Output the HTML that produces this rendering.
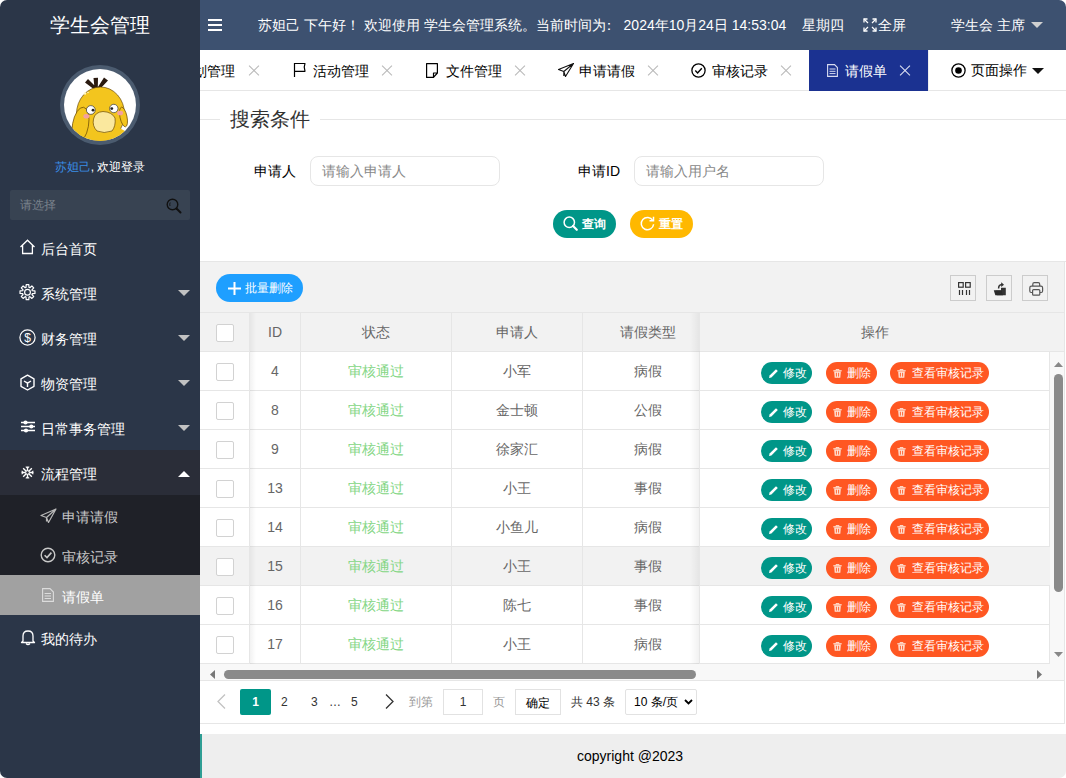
<!DOCTYPE html>
<html><head><meta charset="utf-8">
<style>
*{box-sizing:border-box;margin:0;padding:0}
html,body{width:1066px;height:778px;background:#fff;overflow:hidden;font-family:"Liberation Sans",sans-serif}
#app{position:absolute;left:0;top:0;width:1066px;height:778px;border-radius:7px;overflow:hidden;background:#fff}
.abs{position:absolute}
.t{position:absolute;white-space:nowrap;line-height:20px}
svg{position:absolute;overflow:visible}
#side{left:0;top:0;width:200px;height:778px;background:#2b3648}
#side .title{left:0;width:200px;top:13px;text-align:center;color:#fff;font-size:20px;line-height:24px}
.mi{position:absolute;left:0;width:200px;height:45px}
.mi .tx{position:absolute;left:41px;top:2px;line-height:45px;font-size:14px;color:#fff;white-space:nowrap;font-weight:500}
.mi .arr{position:absolute;left:178px;top:20px;width:0;height:0;border-left:6px solid transparent;border-right:6px solid transparent;border-top:6px solid #c2c2c2}
.si{position:absolute;left:0;width:200px;height:40px}
.si .tx{position:absolute;left:62px;top:2px;line-height:40px;font-size:14px;color:#c8c8c8;white-space:nowrap;font-weight:500}
#hdr{left:200px;top:0;width:866px;height:50px;background:#3d5170}
#hdr .t{color:#fff;font-size:14px;top:15px;font-weight:500}
#tabs{left:200px;top:50px;width:866px;height:41px;background:#fff;border-bottom:1px solid #e6e6e6}
#tabs .t{color:#000;font-weight:500}
.x{position:absolute;width:11px;height:11px}
.x:before,.x:after{content:"";position:absolute;left:-1.5px;top:5px;width:14px;height:1px;background:#b8b8b8;transform:rotate(45deg)}
.x:after{transform:rotate(-45deg)}
.xw:before,.xw:after{background:#e0e4f4}
.lbl{font-size:14px;color:#000;font-weight:500}
.inp{position:absolute;height:30px;width:190px;border:1px solid #e6e6e6;border-radius:8px;background:#fff}
.inp .t{left:11px;top:4px;font-size:14px;color:#888}
.btn{position:absolute;height:28px;border-radius:14px;color:#fff;font-size:12px}
.tbl-line{position:absolute;height:1px;background:#e6e6e6}
.vl{position:absolute;width:1px;background:#e6e6e6}
.cb{position:absolute;width:18px;height:18px;border:1px solid #d2d2d2;border-radius:2px;background:#fff}
.cell{position:absolute;text-align:center;font-size:14px;color:#666;line-height:20px;white-space:nowrap}
.green{color:#84d684}
.ob{position:absolute;height:22px;border-radius:11px;color:#fff;font-size:12px;line-height:22px;font-weight:500}

</style></head><body>
<div id="app">
<div class="tbl-line" style="left:200px;top:119px;width:20px"></div>
<div class="tbl-line" style="left:320px;top:119px;width:746px"></div>
<div class="t" style="left:230px;top:106px;font-size:20px;line-height:26px;color:#333;font-weight:300">搜索条件</div>
<div class="t lbl" style="left:254px;top:161px">申请人</div>
<div class="inp" style="left:310px;top:156px"><div class="t">请输入申请人</div></div>
<div class="t lbl" style="left:578px;top:161px">申请ID</div>
<div class="inp" style="left:634px;top:156px"><div class="t">请输入用户名</div></div>
<div class="btn" style="left:553px;top:210px;width:63px;background:#009688"><svg width="15" height="15" style="left:10px;top:6px"><circle cx="6.3" cy="6.3" r="5.2" fill="none" stroke="#fff" stroke-width="1.5"/><path d="M10 10L13.8 13.8" stroke="#fff" stroke-width="2.2" stroke-linecap="round"/></svg><div class="t" style="left:29px;top:4px;font-size:12px;font-weight:bold">查询</div></div>
<div class="btn" style="left:630px;top:210px;width:63px;background:#ffb800"><svg width="15" height="15" style="left:10px;top:6px"><path d="M12.8 4.5 A6.2 6.2 0 1 0 13.6 8.2" fill="none" stroke="#fff" stroke-width="1.5"/><path d="M9.5 4.8 H13.5 V0.8" fill="none" stroke="#fff" stroke-width="1.5"/></svg><div class="t" style="left:29px;top:4px;font-size:12px;font-weight:bold">重置</div></div>
<div class="abs" style="left:200px;top:261px;width:866px;height:1px;background:#e6e6e6"></div>
<div class="abs" style="left:200px;top:262px;width:864px;height:51px;background:#f2f2f2;border-bottom:1px solid #e6e6e6"></div>
<div class="abs" style="left:1064px;top:262px;width:1px;height:462px;background:#e6e6e6"></div>
<div class="btn" style="left:216px;top:274px;width:87px;background:#1e9fff"><svg width="13" height="13" style="left:12px;top:8px"><path d="M6.5 0V13M0 6.5H13" stroke="#fff" stroke-width="2"/></svg><div class="t" style="left:29px;top:4px;font-size:12px;font-weight:500">批量删除</div></div>
<div class="abs" style="left:950px;top:275px;width:26px;height:26px;border:1px solid #ccc"></div>
<div class="abs" style="left:986px;top:275px;width:26px;height:26px;border:1px solid #ccc"></div>
<div class="abs" style="left:1022px;top:275px;width:26px;height:26px;border:1px solid #ccc"></div>
<svg width="14" height="14" style="left:957px;top:281px"><rect x="1.6" y="1.6" width="4.6" height="4.6" fill="none" stroke="#333" stroke-width="1.2"/><rect x="8.6" y="1.6" width="4.6" height="4.6" fill="none" stroke="#333" stroke-width="1.2"/><path d="M2.5 9V14M5.5 9V14M9.5 9V14M12.5 9V14" stroke="#333" stroke-width="1.2"/></svg>
<svg width="14" height="14" style="left:992px;top:281px"><path d="M3.5 9.5 H9 V6.8 H13.8 V14.3 H4.8 Z" fill="#333"/><path d="M1.8 9.2 H9.5 L11 14.3 H3.3 Z" fill="#2a2a2a"/><path d="M6.6 7.5 Q6.6 3.8 10 3.6" fill="none" stroke="#333" stroke-width="1.5"/><path d="M9.2 1.2 L12 3.7 L9.2 6 Z" fill="#333"/></svg>
<svg width="15" height="14" style="left:1029px;top:282px"><path d="M3.8 4 V2.2 Q3.8 0.7 5.3 0.7 H9.2 Q10.7 0.7 10.7 2.2 V4" fill="none" stroke="#555" stroke-width="1.2"/><path d="M3.5 10.5 H2.2 Q0.8 10.5 0.8 9 V5.8 Q0.8 4.2 2.4 4.2 H12 Q13.6 4.2 13.6 5.8 V9 Q13.6 10.5 12.2 10.5 H11" fill="none" stroke="#555" stroke-width="1.2"/><rect x="3.6" y="7.6" width="7.2" height="5.6" rx="1" fill="#f2f2f2" stroke="#555" stroke-width="1.2"/></svg>
<div class="abs" style="left:200px;top:313px;width:864px;height:38px;background:#f2f2f2"></div>
<div class="abs" style="left:200px;top:352px;width:850px;height:312px;background:#fff"></div>
<div class="abs" style="left:200px;top:547px;width:850px;height:38px;background:#f2f2f2"></div>
<div class="tbl-line" style="left:200px;top:351px;width:850px"></div>
<div class="tbl-line" style="left:200px;top:390px;width:850px"></div>
<div class="tbl-line" style="left:200px;top:429px;width:850px"></div>
<div class="tbl-line" style="left:200px;top:468px;width:850px"></div>
<div class="tbl-line" style="left:200px;top:507px;width:850px"></div>
<div class="tbl-line" style="left:200px;top:546px;width:850px"></div>
<div class="tbl-line" style="left:200px;top:585px;width:850px"></div>
<div class="tbl-line" style="left:200px;top:624px;width:850px"></div>
<div class="tbl-line" style="left:200px;top:663px;width:850px"></div>
<div class="tbl-line" style="left:1050px;top:351px;width:14px"></div>
<div class="vl" style="left:249px;top:313px;height:351px"></div>
<div class="vl" style="left:300px;top:313px;height:351px"></div>
<div class="vl" style="left:451px;top:313px;height:351px"></div>
<div class="vl" style="left:582px;top:313px;height:351px"></div>
<div class="abs" style="left:250px;top:313px;width:6px;height:351px;background:linear-gradient(to right,rgba(0,0,0,0.05),rgba(0,0,0,0))"></div>
<div class="cb" style="left:216px;top:324px"></div>
<div class="cell" style="left:250px;width:50px;top:322px">ID</div>
<div class="cell" style="left:301px;width:150px;top:322px">状态</div>
<div class="cell" style="left:452px;width:130px;top:322px">申请人</div>
<div class="cell" style="left:583px;width:130px;top:322px">请假类型</div>
<div class="cb" style="left:216px;top:363px"></div>
<div class="cell" style="left:250px;width:50px;top:361px">4</div>
<div class="cell green" style="left:301px;width:150px;top:361px">审核通过</div>
<div class="cell" style="left:452px;width:130px;top:361px">小军</div>
<div class="cell" style="left:583px;width:130px;top:361px">病假</div>
<div class="cb" style="left:216px;top:402px"></div>
<div class="cell" style="left:250px;width:50px;top:400px">8</div>
<div class="cell green" style="left:301px;width:150px;top:400px">审核通过</div>
<div class="cell" style="left:452px;width:130px;top:400px">金士顿</div>
<div class="cell" style="left:583px;width:130px;top:400px">公假</div>
<div class="cb" style="left:216px;top:441px"></div>
<div class="cell" style="left:250px;width:50px;top:439px">9</div>
<div class="cell green" style="left:301px;width:150px;top:439px">审核通过</div>
<div class="cell" style="left:452px;width:130px;top:439px">徐家汇</div>
<div class="cell" style="left:583px;width:130px;top:439px">病假</div>
<div class="cb" style="left:216px;top:480px"></div>
<div class="cell" style="left:250px;width:50px;top:478px">13</div>
<div class="cell green" style="left:301px;width:150px;top:478px">审核通过</div>
<div class="cell" style="left:452px;width:130px;top:478px">小王</div>
<div class="cell" style="left:583px;width:130px;top:478px">事假</div>
<div class="cb" style="left:216px;top:519px"></div>
<div class="cell" style="left:250px;width:50px;top:517px">14</div>
<div class="cell green" style="left:301px;width:150px;top:517px">审核通过</div>
<div class="cell" style="left:452px;width:130px;top:517px">小鱼儿</div>
<div class="cell" style="left:583px;width:130px;top:517px">病假</div>
<div class="cb" style="left:216px;top:558px"></div>
<div class="cell" style="left:250px;width:50px;top:556px">15</div>
<div class="cell green" style="left:301px;width:150px;top:556px">审核通过</div>
<div class="cell" style="left:452px;width:130px;top:556px">小王</div>
<div class="cell" style="left:583px;width:130px;top:556px">事假</div>
<div class="cb" style="left:216px;top:597px"></div>
<div class="cell" style="left:250px;width:50px;top:595px">16</div>
<div class="cell green" style="left:301px;width:150px;top:595px">审核通过</div>
<div class="cell" style="left:452px;width:130px;top:595px">陈七</div>
<div class="cell" style="left:583px;width:130px;top:595px">事假</div>
<div class="cb" style="left:216px;top:636px"></div>
<div class="cell" style="left:250px;width:50px;top:634px">17</div>
<div class="cell green" style="left:301px;width:150px;top:634px">审核通过</div>
<div class="cell" style="left:452px;width:130px;top:634px">小王</div>
<div class="cell" style="left:583px;width:130px;top:634px">病假</div>
<div class="abs" style="left:690px;top:313px;width:10px;height:351px;background:linear-gradient(to left,rgba(0,0,0,0.06),rgba(0,0,0,0))"></div>
<div class="abs" style="left:699px;top:313px;width:365px;height:38px;background:#f2f2f2;border-left:1px solid #e6e6e6"></div>
<div class="cell" style="left:700px;width:350px;top:322px">操作</div>
<div class="abs" style="left:699px;top:352px;width:351px;height:312px;background:#fff;border-left:1px solid #e6e6e6;border-right:1px solid #e6e6e6"></div>
<div class="abs" style="left:700px;top:547px;width:350px;height:38px;background:#f2f2f2"></div>
<div class="tbl-line" style="left:700px;top:351px;width:350px"></div>
<div class="tbl-line" style="left:700px;top:390px;width:350px"></div>
<div class="tbl-line" style="left:700px;top:429px;width:350px"></div>
<div class="tbl-line" style="left:700px;top:468px;width:350px"></div>
<div class="tbl-line" style="left:700px;top:507px;width:350px"></div>
<div class="tbl-line" style="left:700px;top:546px;width:350px"></div>
<div class="tbl-line" style="left:700px;top:585px;width:350px"></div>
<div class="tbl-line" style="left:700px;top:624px;width:350px"></div>
<div class="tbl-line" style="left:700px;top:663px;width:350px"></div>
<div class="ob" style="left:761px;top:362px;width:51px;background:#009688"><svg width="11" height="11" style="left:7px;top:6px"><path d="M1 10L1.6 7.6L8 1.2L9.8 3L3.4 9.4Z" fill="#fff"/></svg><div class="t" style="left:22px;top:1px;font-size:12px">修改</div></div>
<div class="ob" style="left:826px;top:362px;width:51px;background:#ff5722"><svg width="9" height="9" style="left:7px;top:7px"><path d="M0.3 1.8H8.7" stroke="#ffe2d4" stroke-width="1.2"/><path d="M3 1.5V0.5H6V1.5" fill="none" stroke="#ffe2d4" stroke-width="0.9"/><path d="M1.2 2.6H7.8L7.3 8.8H1.7Z" fill="#ffe2d4"/><path d="M3.4 3.8V7.6M5.6 3.8V7.6" stroke="#ff5722" stroke-width="0.9"/></svg><div class="t" style="left:21px;top:1px;font-size:12px">删除</div></div>
<div class="ob" style="left:890px;top:362px;width:99px;background:#ff5722"><svg width="9" height="9" style="left:7px;top:7px"><path d="M0.3 1.8H8.7" stroke="#ffe2d4" stroke-width="1.2"/><path d="M3 1.5V0.5H6V1.5" fill="none" stroke="#ffe2d4" stroke-width="0.9"/><path d="M1.2 2.6H7.8L7.3 8.8H1.7Z" fill="#ffe2d4"/><path d="M3.4 3.8V7.6M5.6 3.8V7.6" stroke="#ff5722" stroke-width="0.9"/></svg><div class="t" style="left:22px;top:1px;font-size:12px">查看审核记录</div></div>
<div class="ob" style="left:761px;top:401px;width:51px;background:#009688"><svg width="11" height="11" style="left:7px;top:6px"><path d="M1 10L1.6 7.6L8 1.2L9.8 3L3.4 9.4Z" fill="#fff"/></svg><div class="t" style="left:22px;top:1px;font-size:12px">修改</div></div>
<div class="ob" style="left:826px;top:401px;width:51px;background:#ff5722"><svg width="9" height="9" style="left:7px;top:7px"><path d="M0.3 1.8H8.7" stroke="#ffe2d4" stroke-width="1.2"/><path d="M3 1.5V0.5H6V1.5" fill="none" stroke="#ffe2d4" stroke-width="0.9"/><path d="M1.2 2.6H7.8L7.3 8.8H1.7Z" fill="#ffe2d4"/><path d="M3.4 3.8V7.6M5.6 3.8V7.6" stroke="#ff5722" stroke-width="0.9"/></svg><div class="t" style="left:21px;top:1px;font-size:12px">删除</div></div>
<div class="ob" style="left:890px;top:401px;width:99px;background:#ff5722"><svg width="9" height="9" style="left:7px;top:7px"><path d="M0.3 1.8H8.7" stroke="#ffe2d4" stroke-width="1.2"/><path d="M3 1.5V0.5H6V1.5" fill="none" stroke="#ffe2d4" stroke-width="0.9"/><path d="M1.2 2.6H7.8L7.3 8.8H1.7Z" fill="#ffe2d4"/><path d="M3.4 3.8V7.6M5.6 3.8V7.6" stroke="#ff5722" stroke-width="0.9"/></svg><div class="t" style="left:22px;top:1px;font-size:12px">查看审核记录</div></div>
<div class="ob" style="left:761px;top:440px;width:51px;background:#009688"><svg width="11" height="11" style="left:7px;top:6px"><path d="M1 10L1.6 7.6L8 1.2L9.8 3L3.4 9.4Z" fill="#fff"/></svg><div class="t" style="left:22px;top:1px;font-size:12px">修改</div></div>
<div class="ob" style="left:826px;top:440px;width:51px;background:#ff5722"><svg width="9" height="9" style="left:7px;top:7px"><path d="M0.3 1.8H8.7" stroke="#ffe2d4" stroke-width="1.2"/><path d="M3 1.5V0.5H6V1.5" fill="none" stroke="#ffe2d4" stroke-width="0.9"/><path d="M1.2 2.6H7.8L7.3 8.8H1.7Z" fill="#ffe2d4"/><path d="M3.4 3.8V7.6M5.6 3.8V7.6" stroke="#ff5722" stroke-width="0.9"/></svg><div class="t" style="left:21px;top:1px;font-size:12px">删除</div></div>
<div class="ob" style="left:890px;top:440px;width:99px;background:#ff5722"><svg width="9" height="9" style="left:7px;top:7px"><path d="M0.3 1.8H8.7" stroke="#ffe2d4" stroke-width="1.2"/><path d="M3 1.5V0.5H6V1.5" fill="none" stroke="#ffe2d4" stroke-width="0.9"/><path d="M1.2 2.6H7.8L7.3 8.8H1.7Z" fill="#ffe2d4"/><path d="M3.4 3.8V7.6M5.6 3.8V7.6" stroke="#ff5722" stroke-width="0.9"/></svg><div class="t" style="left:22px;top:1px;font-size:12px">查看审核记录</div></div>
<div class="ob" style="left:761px;top:479px;width:51px;background:#009688"><svg width="11" height="11" style="left:7px;top:6px"><path d="M1 10L1.6 7.6L8 1.2L9.8 3L3.4 9.4Z" fill="#fff"/></svg><div class="t" style="left:22px;top:1px;font-size:12px">修改</div></div>
<div class="ob" style="left:826px;top:479px;width:51px;background:#ff5722"><svg width="9" height="9" style="left:7px;top:7px"><path d="M0.3 1.8H8.7" stroke="#ffe2d4" stroke-width="1.2"/><path d="M3 1.5V0.5H6V1.5" fill="none" stroke="#ffe2d4" stroke-width="0.9"/><path d="M1.2 2.6H7.8L7.3 8.8H1.7Z" fill="#ffe2d4"/><path d="M3.4 3.8V7.6M5.6 3.8V7.6" stroke="#ff5722" stroke-width="0.9"/></svg><div class="t" style="left:21px;top:1px;font-size:12px">删除</div></div>
<div class="ob" style="left:890px;top:479px;width:99px;background:#ff5722"><svg width="9" height="9" style="left:7px;top:7px"><path d="M0.3 1.8H8.7" stroke="#ffe2d4" stroke-width="1.2"/><path d="M3 1.5V0.5H6V1.5" fill="none" stroke="#ffe2d4" stroke-width="0.9"/><path d="M1.2 2.6H7.8L7.3 8.8H1.7Z" fill="#ffe2d4"/><path d="M3.4 3.8V7.6M5.6 3.8V7.6" stroke="#ff5722" stroke-width="0.9"/></svg><div class="t" style="left:22px;top:1px;font-size:12px">查看审核记录</div></div>
<div class="ob" style="left:761px;top:518px;width:51px;background:#009688"><svg width="11" height="11" style="left:7px;top:6px"><path d="M1 10L1.6 7.6L8 1.2L9.8 3L3.4 9.4Z" fill="#fff"/></svg><div class="t" style="left:22px;top:1px;font-size:12px">修改</div></div>
<div class="ob" style="left:826px;top:518px;width:51px;background:#ff5722"><svg width="9" height="9" style="left:7px;top:7px"><path d="M0.3 1.8H8.7" stroke="#ffe2d4" stroke-width="1.2"/><path d="M3 1.5V0.5H6V1.5" fill="none" stroke="#ffe2d4" stroke-width="0.9"/><path d="M1.2 2.6H7.8L7.3 8.8H1.7Z" fill="#ffe2d4"/><path d="M3.4 3.8V7.6M5.6 3.8V7.6" stroke="#ff5722" stroke-width="0.9"/></svg><div class="t" style="left:21px;top:1px;font-size:12px">删除</div></div>
<div class="ob" style="left:890px;top:518px;width:99px;background:#ff5722"><svg width="9" height="9" style="left:7px;top:7px"><path d="M0.3 1.8H8.7" stroke="#ffe2d4" stroke-width="1.2"/><path d="M3 1.5V0.5H6V1.5" fill="none" stroke="#ffe2d4" stroke-width="0.9"/><path d="M1.2 2.6H7.8L7.3 8.8H1.7Z" fill="#ffe2d4"/><path d="M3.4 3.8V7.6M5.6 3.8V7.6" stroke="#ff5722" stroke-width="0.9"/></svg><div class="t" style="left:22px;top:1px;font-size:12px">查看审核记录</div></div>
<div class="ob" style="left:761px;top:557px;width:51px;background:#009688"><svg width="11" height="11" style="left:7px;top:6px"><path d="M1 10L1.6 7.6L8 1.2L9.8 3L3.4 9.4Z" fill="#fff"/></svg><div class="t" style="left:22px;top:1px;font-size:12px">修改</div></div>
<div class="ob" style="left:826px;top:557px;width:51px;background:#ff5722"><svg width="9" height="9" style="left:7px;top:7px"><path d="M0.3 1.8H8.7" stroke="#ffe2d4" stroke-width="1.2"/><path d="M3 1.5V0.5H6V1.5" fill="none" stroke="#ffe2d4" stroke-width="0.9"/><path d="M1.2 2.6H7.8L7.3 8.8H1.7Z" fill="#ffe2d4"/><path d="M3.4 3.8V7.6M5.6 3.8V7.6" stroke="#ff5722" stroke-width="0.9"/></svg><div class="t" style="left:21px;top:1px;font-size:12px">删除</div></div>
<div class="ob" style="left:890px;top:557px;width:99px;background:#ff5722"><svg width="9" height="9" style="left:7px;top:7px"><path d="M0.3 1.8H8.7" stroke="#ffe2d4" stroke-width="1.2"/><path d="M3 1.5V0.5H6V1.5" fill="none" stroke="#ffe2d4" stroke-width="0.9"/><path d="M1.2 2.6H7.8L7.3 8.8H1.7Z" fill="#ffe2d4"/><path d="M3.4 3.8V7.6M5.6 3.8V7.6" stroke="#ff5722" stroke-width="0.9"/></svg><div class="t" style="left:22px;top:1px;font-size:12px">查看审核记录</div></div>
<div class="ob" style="left:761px;top:596px;width:51px;background:#009688"><svg width="11" height="11" style="left:7px;top:6px"><path d="M1 10L1.6 7.6L8 1.2L9.8 3L3.4 9.4Z" fill="#fff"/></svg><div class="t" style="left:22px;top:1px;font-size:12px">修改</div></div>
<div class="ob" style="left:826px;top:596px;width:51px;background:#ff5722"><svg width="9" height="9" style="left:7px;top:7px"><path d="M0.3 1.8H8.7" stroke="#ffe2d4" stroke-width="1.2"/><path d="M3 1.5V0.5H6V1.5" fill="none" stroke="#ffe2d4" stroke-width="0.9"/><path d="M1.2 2.6H7.8L7.3 8.8H1.7Z" fill="#ffe2d4"/><path d="M3.4 3.8V7.6M5.6 3.8V7.6" stroke="#ff5722" stroke-width="0.9"/></svg><div class="t" style="left:21px;top:1px;font-size:12px">删除</div></div>
<div class="ob" style="left:890px;top:596px;width:99px;background:#ff5722"><svg width="9" height="9" style="left:7px;top:7px"><path d="M0.3 1.8H8.7" stroke="#ffe2d4" stroke-width="1.2"/><path d="M3 1.5V0.5H6V1.5" fill="none" stroke="#ffe2d4" stroke-width="0.9"/><path d="M1.2 2.6H7.8L7.3 8.8H1.7Z" fill="#ffe2d4"/><path d="M3.4 3.8V7.6M5.6 3.8V7.6" stroke="#ff5722" stroke-width="0.9"/></svg><div class="t" style="left:22px;top:1px;font-size:12px">查看审核记录</div></div>
<div class="ob" style="left:761px;top:635px;width:51px;background:#009688"><svg width="11" height="11" style="left:7px;top:6px"><path d="M1 10L1.6 7.6L8 1.2L9.8 3L3.4 9.4Z" fill="#fff"/></svg><div class="t" style="left:22px;top:1px;font-size:12px">修改</div></div>
<div class="ob" style="left:826px;top:635px;width:51px;background:#ff5722"><svg width="9" height="9" style="left:7px;top:7px"><path d="M0.3 1.8H8.7" stroke="#ffe2d4" stroke-width="1.2"/><path d="M3 1.5V0.5H6V1.5" fill="none" stroke="#ffe2d4" stroke-width="0.9"/><path d="M1.2 2.6H7.8L7.3 8.8H1.7Z" fill="#ffe2d4"/><path d="M3.4 3.8V7.6M5.6 3.8V7.6" stroke="#ff5722" stroke-width="0.9"/></svg><div class="t" style="left:21px;top:1px;font-size:12px">删除</div></div>
<div class="ob" style="left:890px;top:635px;width:99px;background:#ff5722"><svg width="9" height="9" style="left:7px;top:7px"><path d="M0.3 1.8H8.7" stroke="#ffe2d4" stroke-width="1.2"/><path d="M3 1.5V0.5H6V1.5" fill="none" stroke="#ffe2d4" stroke-width="0.9"/><path d="M1.2 2.6H7.8L7.3 8.8H1.7Z" fill="#ffe2d4"/><path d="M3.4 3.8V7.6M5.6 3.8V7.6" stroke="#ff5722" stroke-width="0.9"/></svg><div class="t" style="left:22px;top:1px;font-size:12px">查看审核记录</div></div>
<div class="abs" style="left:1050px;top:352px;width:14px;height:312px;background:#f8f8f8"></div>
<svg width="9" height="5" style="left:1054px;top:362px"><path d="M0 5L4.5 0L9 5Z" fill="#888"/></svg>
<div class="abs" style="left:1054px;top:374px;width:9px;height:218px;border-radius:5px;background:#8a8a8a"></div>
<svg width="9" height="5" style="left:1054px;top:652px"><path d="M0 0L4.5 5L9 0Z" fill="#888"/></svg>
<div class="abs" style="left:200px;top:664px;width:864px;height:17px;background:#f8f8f8;border-bottom:1px solid #e6e6e6"></div>
<svg width="5" height="9" style="left:210px;top:670px"><path d="M5 0L0 4.5L5 9Z" fill="#777"/></svg>
<div class="abs" style="left:224px;top:670px;width:472px;height:9px;border-radius:5px;background:#8a8a8a"></div>
<svg width="5" height="9" style="left:1037px;top:670px"><path d="M0 0L5 4.5L0 9Z" fill="#777"/></svg>
<div class="abs" style="left:200px;top:723px;width:865px;height:1px;background:#e6e6e6"></div>
<svg width="9" height="15" style="left:217px;top:694px"><path d="M8 0.5L1 7.5L8 14.5" fill="none" stroke="#c2c2c2" stroke-width="1.3"/></svg>
<div class="abs" style="left:240px;top:689px;width:31px;height:26px;background:#009688;border-radius:2px"></div>
<div class="t" style="left:240px;width:31px;text-align:center;top:692px;font-size:12px;color:#fff;font-weight:bold">1</div>
<div class="t" style="left:281px;top:692px;font-size:12px;color:#333">2</div>
<div class="t" style="left:311px;top:692px;font-size:12px;color:#333">3</div>
<div class="t" style="left:329px;top:692px;font-size:12px;color:#333">…</div>
<div class="t" style="left:351px;top:692px;font-size:12px;color:#333">5</div>
<svg width="9" height="15" style="left:385px;top:694px"><path d="M1 0.5L8 7.5L1 14.5" fill="none" stroke="#333" stroke-width="1.3"/></svg>
<div class="t" style="left:409px;top:692px;font-size:12px;color:#999">到第</div>
<div class="abs" style="left:443px;top:689px;width:40px;height:26px;border:1px solid #e2e2e2;background:#fff"></div>
<div class="t" style="left:443px;width:40px;text-align:center;top:692px;font-size:12px;color:#333">1</div>
<div class="t" style="left:493px;top:692px;font-size:12px;color:#999">页</div>
<div class="abs" style="left:515px;top:689px;width:46px;height:26px;border:1px solid #e2e2e2;background:#fff"></div>
<div class="t" style="left:515px;width:46px;text-align:center;top:693px;font-size:12px;color:#000;font-weight:500">确定</div>
<div class="t" style="left:571px;top:692px;font-size:12px;color:#333">共 43 条</div>
<div class="abs" style="left:625px;top:689px;width:72px;height:26px;border:1px solid #e2e2e2;background:#fff;border-radius:2px"></div>
<div class="t" style="left:634px;top:692px;font-size:12px;color:#000">10 条/页</div>
<svg width="9" height="6" style="left:684px;top:699px"><path d="M1 1L4.5 4.5L8 1" fill="none" stroke="#000" stroke-width="1.8"/></svg>
<div class="abs" style="left:200px;top:734px;width:866px;height:44px;background:#eee"></div>
<div class="abs" style="left:200px;top:734px;width:2px;height:44px;background:#2f9e94"></div>
<div class="t" style="left:577px;top:746px;font-size:14px;color:#000">copyright @2023</div>
<div id="tabs" class="abs">
<div class="t" style="left:-21px;top:11px;font-size:14px">计划管理</div>
<div class="x" style="left:48px;top:15px"></div>
<svg width="14" height="16" style="left:93px;top:12px"><path d="M1.5 15V1 M1.5 1.5 H12 Q10.3 5.3 12 9.3 H1.5" fill="none" stroke="#000" stroke-width="1.2" stroke-linejoin="round"/></svg>
<div class="t" style="left:113px;top:11px;font-size:14px">活动管理</div>
<div class="x" style="left:181px;top:15px"></div>
<svg width="12" height="15" style="left:226px;top:13px"><path d="M0.6 0.6H11.4V10L7.5 14.4H0.6Z M11.4 10H7.5V14.4" fill="none" stroke="#000" stroke-width="1.2" stroke-linejoin="round"/></svg>
<div class="t" style="left:246px;top:11px;font-size:14px">文件管理</div>
<div class="x" style="left:314px;top:15px"></div>
<svg width="16" height="14" style="left:358px;top:13px"><path d="M15.5 0.5 L0.5 6.5 L5.8 8.5 L7.5 13.5 Z M15.5 0.5 L5.8 8.5 V13" fill="none" stroke="#111" stroke-width="1.1" stroke-linejoin="round"/></svg>
<div class="t" style="left:379px;top:11px;font-size:14px">申请请假</div>
<div class="x" style="left:447px;top:15px"></div>
<svg width="15" height="15" style="left:491px;top:13px"><circle cx="7.5" cy="7.5" r="6.6" fill="none" stroke="#000" stroke-width="1.3"/><path d="M4.3 7.6L6.6 9.9L10.8 5.2" fill="none" stroke="#000" stroke-width="1.4"/></svg>
<div class="t" style="left:512px;top:11px;font-size:14px">审核记录</div>
<div class="x" style="left:580px;top:15px"></div>
<div class="abs" style="left:609px;top:0;width:119px;height:41px;background:#1b3291"></div>
<svg width="11" height="13" style="left:627px;top:14px"><path d="M0.6 0.6H7.5L10.4 3.5V12.4H0.6Z" fill="none" stroke="#d8dcf0" stroke-width="1.1"/><path d="M2.5 5H8.5M2.5 7.3H8.5M2.5 9.6H8.5" stroke="#d8dcf0" stroke-width="1"/></svg>
<div class="t" style="left:645px;top:11px;font-size:14px;color:#fff">请假单</div>
<div class="x xw" style="left:699px;top:15px"></div>
<div class="abs" style="left:728px;top:0;width:1px;height:40px;background:#eee"></div>
<svg width="15" height="15" style="left:751px;top:13px"><circle cx="7.5" cy="7.5" r="6.6" fill="none" stroke="#000" stroke-width="1.3"/><circle cx="7.5" cy="7.5" r="3.3" fill="#000"/></svg>
<div class="t" style="left:771px;top:10px;font-size:14px">页面操作</div>
<div class="abs" style="left:832px;top:18px;width:0;height:0;border-left:6px solid transparent;border-right:6px solid transparent;border-top:6px solid #111"></div>
</div>
<div id="side" class="abs">
<div class="t title">学生会管理</div>
<div class="abs" style="left:60px;top:65px;width:80px;height:80px;border-radius:50%;background:#4b5b6f"></div>
<div class="abs" style="left:64px;top:69px;width:72px;height:72px;border-radius:50%;background:#fff;overflow:hidden">
<svg width="72" height="72" viewBox="0 0 72 72" style="left:0;top:0">
<path d="M29 19.5 L21 13.5 L24 10 L32 18 Z M30.5 19 L29.5 9 L34 8.8 L33.8 19 Z M33 19.5 L40 8.5 L44 11.5 L35.5 20.5 Z" fill="#2a1a10"/>
<ellipse cx="36.5" cy="45" rx="24" ry="27" fill="#f3c51e" stroke="#6a4a06" stroke-width="0.7"/>
<ellipse cx="38" cy="68" rx="26" ry="12" fill="#f3c51e"/><ellipse cx="59.5" cy="48" rx="3.5" ry="10" fill="#f3c51e" stroke="#6a4a06" stroke-width="0.7" transform="rotate(-12 59.5 48)"/>
<ellipse cx="16.5" cy="56" rx="8" ry="18" fill="#f3c51e" stroke="#6a4a06" stroke-width="0.7" transform="rotate(10 16.5 56)"/>
<circle cx="26.8" cy="41" r="4.4" fill="#fff" stroke="#333" stroke-width="0.7"/><circle cx="29" cy="41.2" r="1.4" fill="#222"/>
<circle cx="49.8" cy="39.5" r="4.2" fill="#fff" stroke="#333" stroke-width="0.7"/><circle cx="47.8" cy="39.6" r="1.4" fill="#222"/>
<ellipse cx="22.4" cy="47.3" rx="3" ry="2.3" fill="#f4a0a0"/><ellipse cx="56.1" cy="44" rx="3" ry="2.3" fill="#f4a0a0"/>
<path d="M29.5 50 Q31 43 39 42.5 Q48 43 51 49 Q52 57 48 62 Q40 65 33 62 Q28 57 29.5 50 Z" fill="#fae89e" stroke="#6a4a06" stroke-width="0.7"/>
<circle cx="21" cy="24.5" r="1.2" fill="#fff6c0"/><circle cx="24" cy="23.5" r="0.8" fill="#fff6c0"/>
</svg></div>
<div class="t" style="left:0;width:200px;text-align:center;top:157px;font-size:12px;color:#fff;font-weight:500"><span style="color:#3a8ee6">苏妲己</span>, 欢迎登录</div>
<div class="abs" style="left:10px;top:190px;width:180px;height:30px;background:#384352;border-radius:2px"></div>
<div class="t" style="left:20px;top:195px;font-size:12px;color:#7a828c">请选择</div>
<svg width="16" height="16" style="left:166px;top:198px"><circle cx="6.5" cy="6.5" r="5.3" fill="none" stroke="#111" stroke-width="1.4"/><path d="M10.5 10.5 L14.5 14.5" stroke="#111" stroke-width="2" stroke-linecap="round"/><path d="M4.2 4.5 Q3.3 6 4 8" stroke="#111" stroke-width="0.9" fill="none"/></svg>
<div class="mi" style="top:225px"><svg width="17" height="16" style="left:19px;top:14px"><path d="M1.5 8 L8.5 1.2 L15.5 8 M3.6 6.2 V14.5 H13.4 V6.2" fill="none" stroke="#fff" stroke-width="1.3"/></svg><div class="tx">后台首页</div></div>
<div class="mi" style="top:270px"><svg width="17" height="17" style="left:19px;top:14px" viewBox="0 0 17 17"><path d="M7.00 3.43 L7.18 0.72 L9.82 0.72 L10.00 3.43 L10.81 3.76 L12.86 1.97 L14.73 3.84 L12.94 5.89 L13.27 6.70 L15.98 6.88 L15.98 9.52 L13.27 9.70 L12.94 10.51 L14.73 12.56 L12.86 14.43 L10.81 12.64 L10.00 12.97 L9.82 15.68 L7.18 15.68 L7.00 12.97 L6.19 12.64 L4.14 14.43 L2.27 12.56 L4.06 10.51 L3.73 9.70 L1.02 9.52 L1.02 6.88 L3.73 6.70 L4.06 5.89 L2.27 3.84 L4.14 1.97 L6.19 3.76Z" fill="none" stroke="#fff" stroke-width="1.2" stroke-linejoin="round"/><circle cx="8.5" cy="8.2" r="2.9" fill="none" stroke="#fff" stroke-width="1.2"/></svg><div class="tx">系统管理</div><div class="arr"></div></div>
<div class="mi" style="top:315px"><svg width="17" height="17" style="left:19px;top:14px"><circle cx="8.5" cy="8.5" r="7.6" fill="none" stroke="#fff" stroke-width="1.2"/><text x="8.5" y="13" text-anchor="middle" font-size="12" fill="#fff" font-family="Liberation Sans">$</text></svg><div class="tx">财务管理</div><div class="arr"></div></div>
<div class="mi" style="top:360px"><svg width="17" height="17" style="left:19px;top:14px"><path d="M8.5 1.2 L15 4.9 V12.3 L8.5 16 L2 12.3 V4.9 Z" fill="none" stroke="#fff" stroke-width="1.4" stroke-linejoin="round"/><path d="M5 7 L8.5 9.2 L12 7 M8.5 9.2 V13" fill="none" stroke="#fff" stroke-width="1.4"/></svg><div class="tx">物资管理</div><div class="arr"></div></div>
<div class="mi" style="top:405px"><svg width="17" height="15" style="left:19px;top:15px"><path d="M2 2.5h14M2 6.5h14M2 10.5h14" stroke="#fff" stroke-width="1.6"/><circle cx="6.5" cy="2.5" r="2.1" fill="#fff"/><circle cx="12.3" cy="6.5" r="2.1" fill="#fff"/><circle cx="7" cy="10.5" r="2.1" fill="#fff"/></svg><div class="tx">日常事务管理</div><div class="arr"></div></div>
<div class="mi" style="top:450px;background:#2a2d38"><svg width="13" height="13" style="left:21px;top:16px" viewBox="0 0 15 15"><path d="M7.5 0.5V14.5M0.5 7.5H14.5M2.5 2.5L12.5 12.5M12.5 2.5L2.5 12.5" stroke="#fff" stroke-width="1.6"/><circle cx="7.5" cy="7.5" r="2" fill="#2a2d38" stroke="#fff" stroke-width="1"/><path d="M5.5 0.8 L7.5 2.5 L9.5 0.8 M5.5 14.2 L7.5 12.5 L9.5 14.2 M0.8 5.5 L2.5 7.5 L0.8 9.5 M14.2 5.5 L12.5 7.5 L14.2 9.5" stroke="#fff" stroke-width="1.2" fill="none"/></svg><div class="tx">流程管理</div><div class="abs" style="left:178px;top:21px;width:0;height:0;border-left:6px solid transparent;border-right:6px solid transparent;border-bottom:6px solid #fff"></div></div>
<div class="abs" style="left:0;top:495px;width:200px;height:80px;background:#1f2128"></div>
<div class="si" style="top:495px"><svg width="17" height="15" style="left:40px;top:13px"><path d="M16 1 L1 7.5 L6.5 9.5 L8.5 14.5 Z M16 1 L6.5 9.5 V13.5" fill="none" stroke="#b8b8b8" stroke-width="1.2" stroke-linejoin="round"/></svg><div class="tx">申请请假</div></div>
<div class="si" style="top:535px"><svg width="16" height="16" style="left:40px;top:12px"><circle cx="8" cy="8" r="6.8" fill="none" stroke="#c8c8c8" stroke-width="1.4"/><path d="M4.6 8.2 L7 10.6 L11.4 5.6" fill="none" stroke="#c8c8c8" stroke-width="1.6"/></svg><div class="tx">审核记录</div></div>
<div class="si" style="top:575px;background:#a1a1a1"><svg width="12" height="14" style="left:42px;top:13px"><path d="M0.6 0.6 H8 L11.4 4 V13.4 H0.6 Z" fill="none" stroke="#dcdcdc" stroke-width="1.1"/><path d="M2.6 5.5H9M2.6 8H9M2.6 10.5H9" stroke="#dcdcdc" stroke-width="1"/></svg><div class="tx" style="color:#fff">请假单</div></div>
<div class="mi" style="top:615px"><svg width="16" height="17" style="left:20px;top:14px"><path d="M3 12 V7 Q3 2 8 2 Q13 2 13 7 V12 L14.5 13.5 H1.5 Z" fill="none" stroke="#fff" stroke-width="1.3" stroke-linejoin="round"/><path d="M6 14.5 Q8 16.5 10 14.5" fill="none" stroke="#fff" stroke-width="1.3"/></svg><div class="tx">我的待办</div></div>
</div>
<div id="hdr" class="abs">
<svg width="14" height="12" style="left:8px;top:19px"><path d="M0 1H14M0 6H14M0 11H14" stroke="#fff" stroke-width="2"/></svg>
<div class="t" style="left:58px">苏妲己 下午好！ 欢迎使用 学生会管理系统。当前时间为<span style="position:relative;left:-4px">：</span> 2024年10月24日&nbsp;14:53:04&nbsp;&nbsp;&nbsp;&nbsp;星期四</div>
<svg width="14" height="14" style="left:663px;top:18px"><path d="M1 1L5 5M13 1L9 5M13 13L9 9M1 13L5 9" stroke="#fff" stroke-width="1.2"/><path d="M1 4.5V1H4.5M9.5 1H13V4.5M13 9.5V13H9.5M4.5 13H1V9.5" fill="none" stroke="#fff" stroke-width="1.3"/></svg>
<div class="t" style="left:678px;font-weight:500">全屏</div>
<div class="t" style="left:751px;font-weight:500">学生会 主席</div>
<div class="abs" style="left:831px;top:22px;width:0;height:0;border-left:6px solid transparent;border-right:6px solid transparent;border-top:6px solid #d0d0d0"></div>
</div>
</div>
</body></html>
